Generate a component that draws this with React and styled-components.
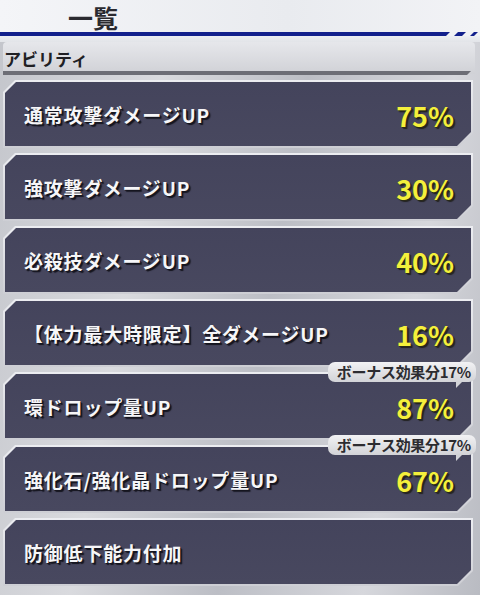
import React from 'react'
import styled, { createGlobalStyle } from 'styled-components'

const GlobalStyle = createGlobalStyle`
    body {
        margin: 0;
        font-family: "Noto Sans CJK JP", "Noto Sans", sans-serif;
    }
`;

const abilities = [
    { name: '通常攻撃ダメージUP', value: '75%' },
    { name: '強攻撃ダメージUP', value: '30%' },
    { name: '必殺技ダメージUP', value: '40%' },
    { name: '【体力最大時限定】全ダメージUP', value: '16%' },
    { name: '環ドロップ量UP', value: '87%', bonus: 'ボーナス効果分17%' },
    { name: '強化石/強化晶ドロップ量UP', value: '67%', bonus: 'ボーナス効果分17%' },
    { name: '防御低下能力付加' },
];

const Page = styled.div`
    width: 480px;
    height: 595px;
    overflow: hidden;
    background: linear-gradient(100deg, #c3c5cb 0%, #d9dade 30%, #bcbec5 55%, #d6d7dc 80%, #b9bbc2 100%);
`;

const Header = styled.div`
    height: 32px;
    display: flex;
    align-items: flex-end;
    padding-left: 68px;
    background: linear-gradient(90deg, #f4f5f8 0%, #e9ebef 60%, #f2f3f6 100%);
`;

const Title = styled.h1`
    margin: 0 0 1px;
    font-size: 25px;
    line-height: 28px;
    font-weight: 700;
    color: #2a2a30;
`;

const Rule = styled.div`
    display: flex;
    gap: 4px;
    height: 4px;
    padding-right: 2px;
    background: #f0f1f4;
`;

const RuleSegment = styled.div`
    flex: ${p => p.$grow ? 1 : 'none'};
    width: ${p => p.$w || 0}px;
    background: #12208c;
    clip-path: polygon(0 0, 100% 0, calc(100% - 4px) 100%, 0 100%);
    clip-path: ${p => p.$grow ? 'polygon(0 0, 100% 0, calc(100% - 4px) 100%, 0 100%)' : 'polygon(4px 0, 100% 0, calc(100% - 4px) 100%, 0 100%)'};
`;

const Gap = styled.div`
    height: 6px;
    background: linear-gradient(180deg, #eceef2, #e2e4e8);
`;

const Section = styled.div`
    margin: 0 5px 0 3px;
    height: 32px;
    position: relative;
    border-radius: 4px 4px 0 0;
    background: linear-gradient(180deg, #e6e7eb 0%, #d0d1d6 100%);
    display: flex;
    align-items: center;
    padding-left: 1px;
    font-size: 17px;
    font-weight: 700;
    color: #202024;
    &::after {
        content: '';
        position: absolute;
        left: 0;
        right: 4px;
        bottom: -1px;
        height: 4px;
        background: #6d6e76;
        clip-path: polygon(0 0, 100% 0, calc(100% - 4px) 100%, 0 100%);
    }
`;

const List = styled.div`
    display: flex;
    flex-direction: column;
    gap: 5px;
    padding: 6px 7px 0 3px;
`;

const CardWrap = styled.div`
    position: relative;
    height: 68px;
`;

const CardFrame = styled.div`
    height: 100%;
    padding: 2px;
    box-sizing: border-box;
    background: linear-gradient(180deg, #ecedf1, #cdced4);
    clip-path: polygon(12px 0, 100% 0, 100% calc(100% - 15px), calc(100% - 15px) 100%, 0 100%, 0 12px);
`;

const CardBody = styled.div`
    height: 100%;
    display: flex;
    align-items: center;
    justify-content: space-between;
    padding: 0 17px 0 19px;
    box-sizing: border-box;
    background: linear-gradient(180deg, #44445c 0%, #48485f 100%);
    clip-path: polygon(11px 0, 100% 0, 100% calc(100% - 14px), calc(100% - 14px) 100%, 0 100%, 0 11px);
`;

const Name = styled.span`
    font-size: 19px;
    font-weight: 700;
    color: #f6f6f8;
    text-shadow: 1px 1px 0 #15151f, 2px 2px 1px #15151f;
    letter-spacing: 0.8px;
`;

const Value = styled.span`
    font-size: 27px;
    font-weight: 700;
    color: #f4f03c;
    text-shadow: 1px 1px 0 #2a2a18, 2px 2px 1px #222;
    padding-top: 2px;
`;

const Bonus = styled.div`
    position: absolute;
    top: -10px;
    right: -3px;
    height: 20px;
    padding: 0 5px 0 9px;
    border-radius: 7px;
    background: linear-gradient(180deg, #f2f2f4, #d2d3d7);
    font-size: 15px;
    font-weight: 700;
    line-height: 20px;
    color: #2c2c30;
    letter-spacing: -0.3px;
    &::after {
        content: '';
        position: absolute;
        right: 13px;
        bottom: -6px;
        width: 7px;
        height: 7px;
        background: #d2d3d7;
        clip-path: polygon(0 0, 100% 0, 0 100%);
    }
`;

const App = () => {
    return (
        <>
            <GlobalStyle />
            <Page>
                <Header>
                    <Title>一覧</Title>
                </Header>
                <Rule>
                    <RuleSegment $grow />
                    <RuleSegment $w={12} />
                    <RuleSegment $w={8} />
                </Rule>
                <Gap />
                <Section>アビリティ</Section>
                <List>
                    {abilities.map(a => (
                        <CardWrap key={a.name}>
                            <CardFrame>
                                <CardBody>
                                    <Name>{a.name}</Name>
                                    {a.value && <Value>{a.value}</Value>}
                                </CardBody>
                            </CardFrame>
                            {a.bonus && <Bonus>{a.bonus}</Bonus>}
                        </CardWrap>
                    ))}
                </List>
            </Page>
        </>
    )
}

export default App;
